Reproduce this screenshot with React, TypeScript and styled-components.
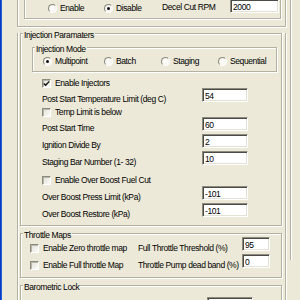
import React from 'react';
import styled, { createGlobalStyle } from 'styled-components';

const FACE = '#ece9d8';
const LINE = '#b4b1a2';

const GlobalStyle = createGlobalStyle`
  html, body { margin: 0; padding: 0; background: ${FACE}; }
  body {
    font-family: "Liberation Sans", Arial, sans-serif;
    font-size: 8.5px;
    letter-spacing: -0.4px;
    color: #000;
  }
  * { box-sizing: border-box; }
`;

const Window = styled.div`
  display: flex;
  width: 300px;
  height: 300px;
  overflow: hidden;
  background: ${FACE};
`;

const BlueEdge = styled.div`
  flex: none;
  width: 2px;
  background: #2a60dc;
  border-left: 1px solid #0b3ac2;
`;

const Client = styled.div`
  flex: 1;
  padding-left: 15px;
`;

const Viewport = styled.div`
  width: 274px;
  height: 100%;
  border-right: 1px solid ${LINE};
  box-shadow: 1px 0 0 #fff;
`;

const Etched = styled.div`
  position: relative;
  border: 1px solid ${LINE};
  box-shadow: inset 1px 1px 0 #fff, 1px 1px 0 #fff;
`;

const DecelFrame = styled(Etched)`
  width: 269px;
  margin-top: -40px;
  padding: 10px 4px 7px 6px;
`;

const MainFrame = styled(Etched)`
  width: 269px;
  border-top: none;
  padding: 0 3px 0 2px;
  height: 400px;
`;

const CutGroup = styled(Etched)`
  padding: 27px 0 5px 23px;
`;

const ParamGroup = styled(Etched)`
  margin-top: 6px;
  padding-bottom: 5px;
`;

const ModeGroup = styled(Etched)`
  margin: 13px 4px 0 11px;
  padding: 6px 0 4px 10px;
`;

const ThrottleGroup = styled(Etched)`
  margin-top: 7px;
  padding: 3px 0 6px 9px;
`;

const BaroGroup = styled(Etched)`
  margin-top: 7px;
  height: 40px;
  padding: 11px 0 0 186px;
`;

const Caption = styled.span`
  position: absolute;
  left: 2px;
  top: -4px;
  padding: 0 1px;
  line-height: 10px;
  background: ${FACE};
  white-space: nowrap;
`;

const OptionRow = styled.div<{ $h: number }>`
  display: flex;
  align-items: flex-start;
  height: ${p => p.$h}px;
`;

const RadioOption = styled.label<{ $w?: number; $top?: number }>`
  display: flex;
  align-items: center;
  gap: 3px;
  height: 10px;
  line-height: 10px;
  white-space: nowrap;
  width: ${p => (p.$w ? `${p.$w}px` : 'auto')};
  margin-top: ${p => p.$top ?? 0}px;
  flex: none;
`;

const RadioDot = styled.span<{ $on?: boolean }>`
  flex: none;
  width: 9px;
  height: 9px;
  border-radius: 50%;
  border: 1px solid;
  border-color: #8a877a #fff #fff #8a877a;
  background: radial-gradient(circle, #fff 0%, #f1efe6 100%);
  display: flex;
  align-items: center;
  justify-content: center;
  &::after {
    content: '';
    width: 3px;
    height: 3px;
    border-radius: 50%;
    background: ${p => (p.$on ? '#111' : 'transparent')};
  }
`;

const Label = styled.span<{ $w: number; $top?: number }>`
  flex: none;
  width: ${p => p.$w}px;
  margin-top: ${p => p.$top ?? 6}px;
  line-height: 10px;
  white-space: nowrap;
`;

const TextBox = styled.input<{ $w: number }>`
  flex: none;
  width: ${p => p.$w}px;
  height: 14px;
  margin: 0;
  padding: 1px 0 0 2px;
  font: inherit;
  letter-spacing: inherit;
  color: #000;
  background: #fff;
  border: 1px solid;
  border-color: #8d8a7e #fff #fff #8d8a7e;
  box-shadow: inset 1px 1px 0 #4c4a44, inset -1px -1px 0 #e3e0d4;
  outline: none;
`;

const Rows = styled.div`
  margin-left: 21px;
  display: flex;
  flex-direction: column;
`;

const CheckRow = styled.div<{ $h: number; $pb?: number }>`
  display: flex;
  align-items: flex-end;
  height: ${p => p.$h}px;
  padding-bottom: ${p => p.$pb ?? 0}px;
`;

const InputRow = styled.div`
  display: flex;
  align-items: flex-start;
  height: 17px;
`;

const CheckOption = styled.label<{ $w?: number; $top?: number }>`
  display: flex;
  align-items: center;
  gap: 4px;
  height: 10px;
  line-height: 10px;
  white-space: nowrap;
  flex: none;
  width: ${p => (p.$w ? `${p.$w}px` : 'auto')};
  margin-top: ${p => p.$top ?? 0}px;
`;

const Box = styled.span`
  flex: none;
  width: 9px;
  height: 9px;
  display: flex;
  align-items: center;
  justify-content: center;
  border: 1px solid;
  border-color: #8d8a7e #fff #fff #8d8a7e;
  box-shadow: inset 1px 1px 0 #b9b6aa;
  background: linear-gradient(135deg, #e2e0d6 0%, #fbfbf8 100%);
`;

function Radio({ label, on, w, top }: { label: string; on?: boolean; w?: number; top?: number }) {
  return (
    <RadioOption $w={w} $top={top}>
      <RadioDot $on={on} />
      {label}
    </RadioOption>
  );
}

function Check({ label, on, w, top }: { label: string; on?: boolean; w?: number; top?: number }) {
  return (
    <CheckOption $w={w} $top={top}>
      <Box>
        {on && (
          <svg width="7" height="7" viewBox="0 0 7 7">
            <path d="M0.8 3.4 L2.7 5.3 L6.3 1.4" fill="none" stroke="#111" strokeWidth="1.4" />
          </svg>
        )}
      </Box>
      {label}
    </CheckOption>
  );
}

function Field({ label, value }: { label: string; value: string }) {
  return (
    <InputRow>
      <Label $w={160}>{label}</Label>
      <TextBox $w={46} defaultValue={value} readOnly />
    </InputRow>
  );
}

export default function App() {
  return (
    <>
      <GlobalStyle />
      <Window>
        <BlueEdge />
        <Client>
          <Viewport>
            <DecelFrame>
              <CutGroup>
                <OptionRow $h={14}>
                  <Radio label="Enable" w={56} top={4} />
                  <Radio label="Disable" on w={58} top={4} />
                  <Label $w={68} $top={3}>Decel Cut RPM</Label>
                  <TextBox $w={49} defaultValue="2000" readOnly />
                </OptionRow>
              </CutGroup>
            </DecelFrame>

            <MainFrame>
              <ParamGroup>
                <Caption>Injection Paramaters</Caption>
                <ModeGroup>
                  <Caption>Injection Mode</Caption>
                  <OptionRow $h={13}>
                    <Radio label="Multipoint" on w={61} top={2} />
                    <Radio label="Batch" w={57} top={2} />
                    <Radio label="Staging" w={57} top={2} />
                    <Radio label="Sequential" top={2} />
                  </OptionRow>
                </ModeGroup>
                <Rows>
                  <CheckRow $h={16}>
                    <Check label="Enable Injectors" on />
                  </CheckRow>
                  <Field label="Post Start Temperature Limit (deg C)" value="54" />
                  <CheckRow $h={12}>
                    <Check label="Temp Limit is below" />
                  </CheckRow>
                  <Field label="Post Start Time" value="60" />
                  <Field label="Ignition Divide By" value="2" />
                  <Field label="Staging Bar Number (1- 32)" value="10" />
                  <CheckRow $h={18} $pb={1}>
                    <Check label="Enable Over Boost Fuel Cut" />
                  </CheckRow>
                  <Field label="Over Boost Press Limit (kPa)" value="-101" />
                  <Field label="Over Boost Restore (kPa)" value="-101" />
                </Rows>
              </ParamGroup>

              <ThrottleGroup>
                <Caption>Throttle Maps</Caption>
                <InputRow>
                  <Check label="Enable Zero throttle map" w={108} top={6} />
                  <Label $w={104}>Full Throttle Threshold (%)</Label>
                  <TextBox $w={28} defaultValue="95" readOnly />
                </InputRow>
                <InputRow>
                  <Check label="Enable Full throttle Map" w={108} top={6} />
                  <Label $w={104}>Throttle Pump dead band (%)</Label>
                  <TextBox $w={28} defaultValue="0" readOnly />
                </InputRow>
              </ThrottleGroup>

              <BaroGroup>
                <Caption>Barometric Lock</Caption>
                <TextBox $w={46} defaultValue="1013" readOnly />
              </BaroGroup>
            </MainFrame>
          </Viewport>
        </Client>
      </Window>
    </>
  );
}
